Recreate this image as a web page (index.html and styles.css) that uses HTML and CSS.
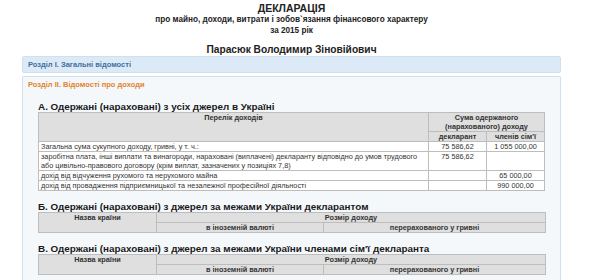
FILE: index.html
```html
<!DOCTYPE html>
<html lang="uk">
<head>
<meta charset="utf-8">
<title>Декларація</title>
<link rel="stylesheet" href="styles.css">
</head>
<body>
<div class="page">
<div class="doc-head">
  <div class="title">ДЕКЛАРАЦІЯ</div>
  <div class="subtitle">про майно, доходи, витрати і зобов`язання фінансового характеру</div>
  <div class="subtitle">за 2015 рік</div>
  <div class="name">Парасюк Володимир Зіновійович</div>
</div>

<div class="panel panel-closed">
  <div class="panel-head">Розділ I. Загальні відомості</div>
</div>

<div class="panel panel-open">
  <div class="panel-head">Розділ II. Відомості про доходи</div>
  <div class="panel-body">
    <div class="sec-title">А. Одержані (нараховані) з усіх джерел в Україні</div>
    <table class="grid grid-a">
      <colgroup><col class="c-list"><col class="c-sum"><col class="c-sum"></colgroup>
      <tr class="hrow1">
        <th rowspan="2">Перелік доходів</th>
        <th colspan="2">Сума одержаного<br>(нарахованого) доходу</th>
      </tr>
      <tr>
        <th>декларант</th>
        <th>членів сім'ї</th>
      </tr>
      <tr>
        <td>Загальна сума сукупного доходу, гривні, у т. ч.:</td>
        <td class="num">75 586,62</td>
        <td class="num">1 055 000,00</td>
      </tr>
      <tr>
        <td>заробітна плата, інші виплати та винагороди, нараховані (виплачені) декларанту відповідно до умов трудового або цивільно-правового договору (крім виплат, зазначених у позиціях 7,8)</td>
        <td class="num">75 586,62</td>
        <td class="num"></td>
      </tr>
      <tr>
        <td>дохід від відчуження рухомого та нерухомого майна</td>
        <td class="num"></td>
        <td class="num">65 000,00</td>
      </tr>
      <tr>
        <td>дохід від провадження підприємницької та незалежної професійної діяльності</td>
        <td class="num"></td>
        <td class="num">990 000,00</td>
      </tr>
    </table>

    <div class="sec-title">Б. Одержані (нараховані) з джерел за межами України декларантом</div>
    <table class="grid grid-b">
      <colgroup><col class="c-country"><col class="c-cur"><col class="c-uah"></colgroup>
      <tr>
        <th rowspan="2">Назва країни</th>
        <th colspan="2">Розмір доходу</th>
      </tr>
      <tr>
        <th>в іноземній валюті</th>
        <th>перерахованого у гривні</th>
      </tr>
    </table>

    <div class="sec-title">В. Одержані (нараховані) з джерел за межами України членами сім'ї декларанта</div>
    <table class="grid grid-b">
      <colgroup><col class="c-country"><col class="c-cur"><col class="c-uah"></colgroup>
      <tr>
        <th rowspan="2">Назва країни</th>
        <th colspan="2">Розмір доходу</th>
      </tr>
      <tr>
        <th>в іноземній валюті</th>
        <th>перерахованого у гривні</th>
      </tr>
    </table>
  </div>
</div>
</div>
</body>
</html>
```

FILE: styles.css
```css
html, body {
  margin: 0;
  padding: 0;
  background: #ffffff;
}
body {
  font-family: "Liberation Sans", Arial, sans-serif;
  color: #222;
  width: 600px;
  height: 280px;
  overflow: hidden;
}
.page {
  width: 583px;
}
.doc-head {
  text-align: center;
  padding-top: 3px;
}
.title {
  font-size: 10.5px;
  font-weight: bold;
  line-height: 11px;
}
.subtitle {
  font-size: 8.2px;
  font-weight: bold;
  line-height: 11px;
}
.name {
  font-size: 10.2px;
  font-weight: bold;
  line-height: 12px;
  margin-top: 8px;
}
.panel {
  margin-left: 22px;
  width: 537px;
  border: 1px solid #cfe0ef;
  border-radius: 2px;
}
.panel-closed {
  background: #dceaf7;
}
.panel-open {
  background: #f5f8fb;
  margin-top: 3px;
  border-bottom: none;
  height: 210px;
}
.panel-head {
  font-size: 7.5px;
  font-weight: bold;
  padding: 3px 5px;
  line-height: 9px;
}
.panel-closed .panel-head {
  color: #416f9d;
}
.panel-open .panel-head {
  color: #e2832d;
}
.panel-body {
  padding: 9px 15px 0 15px;
}
.sec-title {
  font-size: 9.9px;
  font-weight: bold;
  color: #1a1a1a;
  line-height: 11px;
}
.grid {
  border-collapse: collapse;
  width: 507px;
  table-layout: fixed;
  font-size: 7.3px;
  margin-bottom: 10px;
}
.grid th, .grid td {
  border: 1px solid #bdbdbd;
  padding: 0 2px;
  line-height: 9px;
}
.grid th {
  background: #dfdfdf;
  color: #333;
  font-weight: bold;
  text-align: center;
  vertical-align: top;
}
.grid td {
  background: #ffffff;
  color: #333;
  vertical-align: top;
}
.grid td.num {
  text-align: center;
}
.c-list { width: 390px; }
.c-sum { width: 58px; }
.hrow1 th { height: 18px; }
.c-country { width: 118px; }
.c-cur { width: 167px; }
.c-uah { width: 222px; }
```
